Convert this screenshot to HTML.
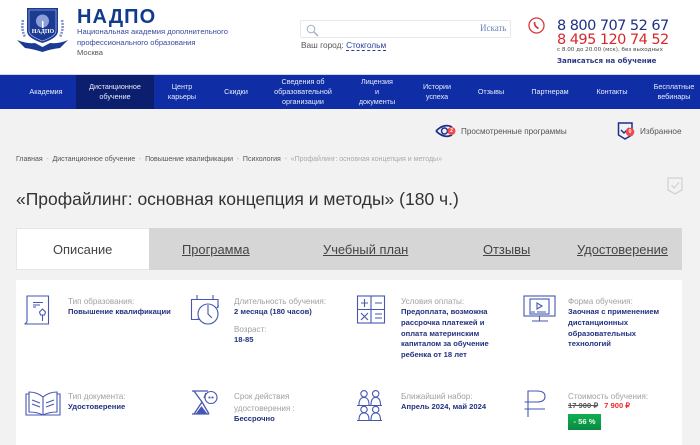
<!DOCTYPE html>
<html lang="ru"><head><meta charset="utf-8"><title>НАДПО</title>
<style>
html,body{margin:0;padding:0}
body{width:700px;height:445px;overflow:hidden;position:relative;background:#fff;font-family:"Liberation Sans",sans-serif}
.a{position:absolute;white-space:nowrap}
.n{position:absolute;top:75px;height:34px;display:flex;align-items:center;justify-content:center;text-align:center;color:#e8ecfa;font-size:7.2px;line-height:10px;width:80px}
.t{position:absolute;top:228px;height:42px;line-height:43px;font-size:12.9px;color:#444;text-decoration:underline;white-space:nowrap}
.l{position:absolute;font-size:8.1px;color:#a0a0a0;line-height:11px;white-space:nowrap}
.v{position:absolute;font-size:7.6px;font-weight:bold;color:#22317f;line-height:10.8px;white-space:nowrap}
svg{position:absolute;overflow:visible}
.ic{fill:none;stroke:#4557b0;stroke-width:1.1}
</style></head><body>
<!-- logo -->
<svg style="left:15px;top:7px" width="56" height="48" viewBox="0 0 56 48">
<path d="M12 1H43V24Q43 31 27.500 36Q12 31 12 24Z" fill="#1b3a94"/>
<path d="M14 3H41V24Q41 29 27.500 34Q14 29 14 24Z" fill="none" stroke="#c7d2ee" stroke-width=".6"/>
<circle cx="27.500" cy="14" r="6.500" fill="#8da0d6"/><rect x="27" y="14" width="1.500" height="7" fill="#fff"/>
<path d="M2 33Q12 37 20 36L27.500 40L35 36Q44 37 53 33L45 41Q36 42 27.500 45Q18 42 10 41Z" fill="#1b3a94"/>
<path d="M8 13Q6 22 10 30M47 13Q49 22 45 30" fill="none" stroke="#7f93c9" stroke-width="2.500" stroke-dasharray="2 1"/>
</svg>
<div class="a" style="left:15px;top:28px;width:56px;text-align:center;color:#fff;font:bold 6px/8px 'Liberation Serif',serif">НАДПО</div>
<div class="a" style="left:77px;top:5px;font-size:20px;line-height:24px;font-weight:bold;color:#123a8e;letter-spacing:1.1px">НАДПО</div>
<div class="a" style="left:77px;top:27px;font-size:7.6px;line-height:10.500px;color:#3a4ba0">Национальная академия дополнительного<br>профессионального образования<br><span style="color:#555">Москва</span></div>
<!-- search -->
<div class="a" style="left:300px;top:20px;width:209px;height:16px;border:1px solid #e8e8e8;border-radius:2px"></div>
<svg style="left:306px;top:24px" width="13" height="13" viewBox="0 0 13 13"><circle cx="5" cy="5" r="3.800" fill="none" stroke="#a3add0" stroke-width="1"/><path d="M8 8L12 12" stroke="#a3add0" stroke-width="1.500"/></svg>
<div class="a" style="left:480px;top:23px;font:9px 'Liberation Serif',serif;color:#6f7fb5">Искать</div>
<div class="a" style="left:301px;top:40px;font-size:8.3px;line-height:11px;color:#555">Ваш город: <span style="color:#2a3d99;border-bottom:1px dashed #2a3d99">Стокгольм</span></div>
<!-- phones -->
<svg style="left:528px;top:17px" width="17" height="17" viewBox="0 0 17 17"><circle cx="8.500" cy="8.500" r="7.500" fill="none" stroke="#d9363a" stroke-width="1.300"/><path d="M6.500 5Q6.300 9.500 10.500 11.500" fill="none" stroke="#d9363a" stroke-width="1.700"/></svg>
<div class="a" style="left:557px;top:18px;font:14.500px/16px 'DejaVu Sans',sans-serif;letter-spacing:-.55px;color:#1c3187">8 800 707 52 67</div>
<div class="a" style="left:557px;top:32px;font:14.500px/16px 'DejaVu Sans',sans-serif;letter-spacing:-.55px;color:#d9282c">8 495 120 74 52</div>
<div class="a" style="left:557px;top:46px;font:5.600px/8px 'DejaVu Sans',sans-serif;color:#444">с 8.00 до 20.00 (мск), без выходных</div>
<div class="a" style="left:557px;top:55px;font:bold 7.100px/11px 'DejaVu Sans',sans-serif;color:#2a3a85">Записаться на обучение</div>
<!-- nav -->
<div class="a" style="left:0;top:74px;width:700px;height:1px;background:#cfd6ea"></div>
<div class="a" style="left:0;top:75px;width:700px;height:34px;background:#0f2ea6"></div>
<div class="a" style="left:76px;top:75px;width:78px;height:34px;background:#0b1f6e"></div>
<div class="n" style="left:6px">Академия</div>
<div class="n" style="left:75px">Дистанционное<br>обучение</div>
<div class="n" style="left:142px">Центр<br>карьеры</div>
<div class="n" style="left:196px">Скидки</div>
<div class="n" style="left:263px">Сведения об<br>образовательной<br>организации</div>
<div class="n" style="left:337px">Лицензия<br>и<br>документы</div>
<div class="n" style="left:397px">Истории<br>успеха</div>
<div class="n" style="left:451px">Отзывы</div>
<div class="n" style="left:510px">Партнерам</div>
<div class="n" style="left:572px">Контакты</div>
<div class="n" style="left:634px">Бесплатные<br>вебинары</div>
<!-- body bg -->
<div class="a" style="left:0;top:109px;width:700px;height:336px;background:#f2f2f2"></div>
<!-- viewed -->
<svg style="left:435px;top:123px" width="22" height="16" viewBox="0 0 22 16"><path d="M1 8Q9 0 17 4M17 12Q9 16 1 8" fill="none" stroke="#1b2f8e" stroke-width="1.700"/><circle cx="9.500" cy="8" r="3" fill="none" stroke="#1b2f8e" stroke-width="1.500"/><circle cx="16.500" cy="8" r="4" fill="#f04a4a"/></svg>
<div class="a" style="left:447.500px;top:127px;width:8px;text-align:center;font:bold 5px/8px 'Liberation Sans';color:#fff">2</div>
<div class="a" style="left:461px;top:126px;font-size:8.15px;line-height:11px;color:#555">Просмотренные программы</div>
<svg style="left:617px;top:122px" width="19" height="18" viewBox="0 0 19 18"><path d="M1.500 1H15V13L8 17L1.500 13Z" fill="none" stroke="#1b2f8e" stroke-width="1.500"/><path d="M4 8L7 11L12 6" fill="none" stroke="#1b2f8e" stroke-width="1.500"/><circle cx="13" cy="10" r="4.300" fill="#f04a4a"/></svg>
<div class="a" style="left:626px;top:128px;width:8px;text-align:center;font:bold 5px/8px 'Liberation Sans';color:#fff">0</div>
<div class="a" style="left:640px;top:126px;font-size:8.2px;line-height:11px;color:#555">Избранное</div>
<!-- breadcrumbs -->
<div class="a" style="left:16px;top:155px;font-size:7px;line-height:10px;color:#555">Главная <span style="color:#aaa;margin:0 1.8px">-</span> Дистанционное обучение <span style="color:#aaa;margin:0 1.8px">-</span> Повышение квалификации <span style="color:#aaa;margin:0 1.8px">-</span> Психология <span style="color:#aaa;margin:0 1.8px">-</span> <span style="color:#aaa">«Профайлинг: основная концепция и методы»</span></div>
<!-- title -->
<div class="a" style="left:16px;top:188px;font-size:17.5px;line-height:22px;color:#333">«Профайлинг: основная концепция и методы» (180 ч.)</div>
<svg style="left:667px;top:177px" width="16" height="18" viewBox="0 0 16 18"><path d="M1 1H15V13L8 17L1 13Z" fill="none" stroke="#cfd3d6" stroke-width="1.300"/><path d="M4.500 8L7 11L12 5.500" fill="none" stroke="#cfd3d6" stroke-width="1.300"/></svg>
<!-- tabs -->
<div class="a" style="left:149px;top:228px;width:533px;height:42px;background:#d6d6d6"></div>
<div class="a" style="left:16px;top:228px;width:133px;height:42px;background:#fff;border:1px solid #e6e6e6;border-right:0;box-sizing:border-box"></div>
<div class="t" style="left:53px;text-decoration:none">Описание</div>
<div class="t" style="left:182px">Программа</div>
<div class="t" style="left:323px">Учебный план</div>
<div class="t" style="left:483px">Отзывы</div>
<div class="t" style="left:577px">Удостоверение</div>
<!-- panel -->
<div class="a" style="left:16px;top:280px;width:666px;height:165px;background:#fff"></div>
<!-- icons row 1 -->
<svg class="ic" style="left:24px;top:295px" width="26" height="30" viewBox="0 0 26 30"><path d="M3 1H24.500V29H0.500Q3 28 3 26ZM9 7.500H19M9 10H16M9 12H12"/><path d="M18.500 14L21.500 17L20.500 20H16.500L15.500 17Z"/><path d="M18.500 20V26"/></svg>
<svg class="ic" style="left:191px;top:295px" width="29" height="30" viewBox="0 0 29 30"><path d="M9 24.500H0.500V4.500H27V13M6 0V4M22 0V4"/><circle cx="17" cy="19" r="10"/><path d="M17 10V19L21 23M26 13L27.500 10M9 24.500L6 24"/></svg>
<svg class="ic" style="left:357px;top:295px" width="29" height="29" viewBox="0 0 29 29"><rect x="0.500" y="1" width="27" height="27"/><path d="M14 1V28M0.500 14.500H27.500M4 8H11M7.500 4V12M18 8H25M4 18L11 25M11 18L4 25M18 19H25M18 23H25"/></svg>
<svg class="ic" style="left:523px;top:295px" width="33" height="29" viewBox="0 0 33 29"><rect x="1" y="1" width="31" height="20"/><rect x="7" y="4" width="19" height="15"/><path d="M14 8L19 11L14 14ZM16.500 21V26M9 26H25M8 17H12M23 17H14"/></svg>
<!-- icons row 2 -->
<svg class="ic" style="left:25px;top:391px" width="36" height="27" viewBox="0 0 36 27"><path d="M4 3H1V24H35V3H32M18 6Q12 1 4 1V21Q12 21 18 24Q24 21 32 21V1Q24 1 18 6ZM18 6V24M7 9L15 12M7 13L15 16M29 9L21 12M29 13L21 16"/></svg>
<svg class="ic" style="left:191px;top:390px" width="28" height="25" viewBox="0 0 28 25"><path d="M1 1H17M1 24H18M3 1L11 12L3 24M15 3L13 8M11 12L18 24" stroke-width="1.300"/><circle cx="20" cy="7.500" r="6"/><path d="M17.500 7.500H22.500" stroke-dasharray="2 1" stroke-width="1.800"/><path d="M6 23H15L10.500 17Z" fill="#4557b0"/></svg>
<svg class="ic" style="left:357px;top:390px" width="25" height="32" viewBox="0 0 25 32"><circle cx="7" cy="3.800" r="3.200"/><circle cx="18.700" cy="3.800" r="3.200"/><path d="M2 15Q2 7.500 7 7.500Q12 7.500 12 15M14 15Q14 7.500 18.700 7.500Q23.500 7.500 23.500 15M0 15.500H25"/><circle cx="7" cy="19.500" r="3.200"/><circle cx="18.700" cy="19.500" r="3.200"/><path d="M2 30Q2 23 7 23Q12 23 12 30M14 30Q14 23 18.700 23Q23.500 23 23.500 30M0 30.500H25"/></svg>
<svg class="ic" style="left:524px;top:390px" width="23" height="28" viewBox="0 0 23 28"><path d="M4 27V1H13Q21 1 21 6.500Q21 12 13 12H0.500M0.500 19H21"/></svg>
<!-- texts -->
<div class="l" style="left:68px;top:296px">Тип образования:</div>
<div class="v" style="left:68px;top:307px">Повышение квалификации</div>
<div class="l" style="left:234px;top:296px">Длительность обучения:</div>
<div class="v" style="left:234px;top:307px">2 месяца (180 часов)</div>
<div class="l" style="left:234px;top:324px">Возраст:</div>
<div class="v" style="left:234px;top:335px">18-85</div>
<div class="l" style="left:401px;top:296px">Условия оплаты:</div>
<div class="v" style="left:401px;top:307px">Предоплата, возможна<br>рассрочка платежей и<br>оплата материнским<br>капиталом за обучение<br>ребенка от 18 лет</div>
<div class="l" style="left:568px;top:296px">Форма обучения:</div>
<div class="v" style="left:568px;top:307px">Заочная с применением<br>дистанционных<br>образовательных<br>технологий</div>
<div class="l" style="left:68px;top:391px">Тип документа:</div>
<div class="v" style="left:68px;top:402px">Удостоверение</div>
<div class="l" style="left:234px;top:391px;line-height:12px">Срок действия<br>удостоверения :</div>
<div class="v" style="left:234px;top:414px">Бессрочно</div>
<div class="l" style="left:401px;top:391px">Ближайший набор:</div>
<div class="v" style="left:401px;top:402px">Апрель 2024, май 2024</div>
<div class="l" style="left:568px;top:391px">Стоимость обучения:</div>
<div class="a" style="left:568px;top:400px;font-size:7.6px;line-height:12px;font-weight:bold"><span style="color:#555;text-decoration:line-through">17 900 ₽</span><span style="color:#f02a2a;margin-left:6px">7 900 ₽</span></div>
<div class="a" style="left:568px;top:414px;width:33px;height:16px;background:linear-gradient(#0fb04f,#0a8a45);color:#e9f7ee;font-size:7.6px;font-weight:bold;line-height:15px;text-align:center">- 56 %</div>
</body></html>
